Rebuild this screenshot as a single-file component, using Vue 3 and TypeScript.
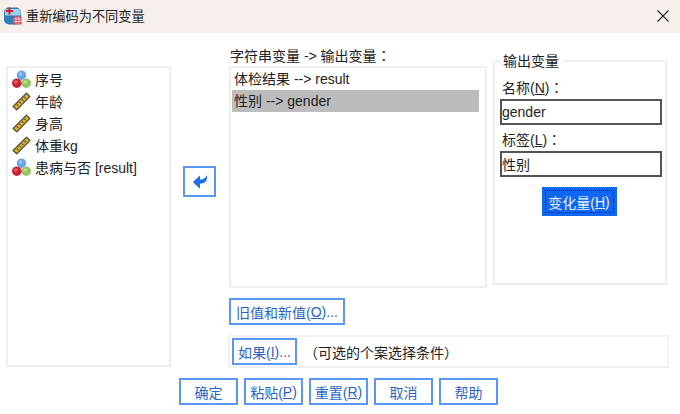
<script setup lang="ts">
interface Item { name: string; type: 'nominal' | 'scale' }
const items: Item[] = [
  { name: '序号', type: 'nominal' },
  { name: '年龄', type: 'scale' },
  { name: '身高', type: 'scale' },
  { name: '体重kg', type: 'scale' },
  { name: '患病与否 [result]', type: 'nominal' },
]
</script>

<template>
  <div class="dialog">
    <header class="titlebar">
      <svg class="appicon" width="20" height="20" viewBox="0 0 20 20">
        <rect x="1" y="1.500" width="17" height="17" rx="5" fill="#2d7fb5" />
        <path d="M4 3h11a2.500 2.500 0 0 1 2.500 2.500V9.500H2V5a2 2 0 0 1 2-2z" fill="#9fd0ea" />
        <path d="M6.500 1.500v7M3 5h7" stroke="#d4202c" stroke-width="2" fill="none" />
        <rect x="10.500" y="10.500" width="8" height="8" fill="#d9394a" />
        <path d="M10.500 13h8M10.500 15.500h8M13 10.500v8M15.800 10.500v8" stroke="#fbe3e3" stroke-width="0.800" />
      </svg>
      <span class="title">重新编码为不同变量</span>
      <svg class="close" width="12" height="12" viewBox="0 0 12 12">
        <path d="M.5.5l11 11M11.500.5l-11 11" stroke="#222" stroke-width="1.100" fill="none" />
      </svg>
    </header>

    <main class="body">
      <div class="work">
        <ul class="source box">
          <li v-for="item in items" :key="item.name" class="src-row">
            <svg v-if="item.type === 'nominal'" class="varicon" width="19" height="19" viewBox="0 0 19 19">
              <circle cx="9.500" cy="5.200" r="4.800" fill="#6aa5e4" />
              <circle cx="14.200" cy="13.200" r="4.800" fill="#97c468" />
              <circle cx="4.800" cy="13.200" r="4.800" fill="#cf2434" />
              <circle cx="8.500" cy="4" r="1.800" fill="#96c4ee" />
              <circle cx="13.200" cy="12" r="1.800" fill="#bcdc90" />
              <circle cx="3.800" cy="12" r="1.800" fill="#e2606a" />
            </svg>
            <svg v-else class="varicon" width="19" height="19" viewBox="0 0 19 19">
              <path d="M14.500 1.200l3.300 3.300L4.800 17.800 1.200 14.500z" fill="#e9b722" stroke="#55524a" stroke-width="1.400" stroke-linejoin="round" />
              <path d="M12.500 5l1.300 1.300M10 7.500l1.300 1.300M7.500 10l1.300 1.300M5 12.500l1.300 1.300" stroke="#4a4430" stroke-width="1.200" fill="none" />
            </svg>
            <span>{{ item.name }}</span>
          </li>
        </ul>

        <div class="right">
          <div class="top">
            <div class="arrow-col">
              <button class="btn arrow" type="button" aria-label="移动">
                <svg width="16" height="16" viewBox="0 0 16 16">
                  <path d="M15 1.200c.6 5.500-1.800 8.300-7 8.400V14.800L.8 8 8 1.500v4c2.800.2 5-.9 7-4.300z" fill="#1e6fe8" />
                </svg>
              </button>
            </div>

            <section class="mapping">
              <div class="map-label">字符串变量 -&gt; 输出变量<span class="tc">：</span></div>
              <ul class="map-list box">
                <li class="map-row">体检结果 --&gt; result</li>
                <li class="map-row selected">性别 --&gt; gender</li>
              </ul>
            </section>

            <fieldset class="output">
              <legend>输出变量</legend>
              <label class="field-label" for="name">名称(<u>N</u>)<span class="tc">：</span></label>
              <input id="name" class="field" value="gender" />
              <label class="field-label second" for="lab">标签(<u>L</u>)<span class="tc">：</span></label>
              <input id="lab" class="field" value="性别" />
              <div class="change-wrap">
                <button class="change" type="button"><span>变化量(<u>H</u>)</span></button>
              </div>
            </fieldset>
          </div>

          <div class="lower">
            <button class="btn old" type="button">旧值和新值(<u>O</u>)...</button>
            <div class="if-panel">
              <button class="btn if" type="button">如果(<u>I</u>)...</button>
              <span class="if-note"><span class="tc">（</span>可选的个案选择条件<span class="tc">）</span></span>
            </div>
          </div>
        </div>
      </div>

      <footer class="actions">
        <button class="btn act" type="button">确定</button>
        <button class="btn act" type="button">粘贴(<u>P</u>)</button>
        <button class="btn act" type="button">重置(<u>R</u>)</button>
        <button class="btn act" type="button">取消</button>
        <button class="btn act" type="button">帮助</button>
      </footer>
    </main>
  </div>
</template>

<style>
html, body { margin: 0; background: #fff; }
</style>

<style scoped>
.dialog {
  width: 680px;
  height: 414px;
  overflow: hidden;
  background: #fff;
  color: #222;
  font-family: "Liberation Sans", "Noto Sans CJK SC", sans-serif;
  font-size: 14px;
  box-sizing: border-box;
}
.titlebar {
  height: 33px;
  background: #f7efec;
  display: flex;
  align-items: center;
  padding: 0 11px 2px 3px;
  box-sizing: border-box;
}
.appicon { flex: none; }
.title { margin-left: 3px; font-size: 13.2px; color: #222; flex: 1; }
.body { padding-left: 6px; }
.work { display: flex; height: 335px; }
.box { border: 2px solid #efefef; box-sizing: border-box; background: #fff; margin: 0; list-style: none; }
.source {
  width: 165px;
  height: 301px;
  margin-top: 33px;
  padding: 0 0 0 4px;
  flex: none;
}
.src-row { height: 22px; display: flex; align-items: center; gap: 4px; font-size: 14px; }
.varicon { flex: none; }
.right { display: flex; flex-direction: column; }
.top { display: flex; align-items: flex-start; height: 255px; }
.arrow-col { width: 58px; flex: none; padding: 133px 0 0 12px; box-sizing: border-box; }
.btn {
  background: #fff;
  border: 2px solid #5a96f5;
  color: #2a64c4;
  font-family: inherit;
  padding: 0;
  box-sizing: border-box;
  display: inline-flex;
  align-items: center;
  justify-content: center;
  white-space: nowrap;
}
.arrow { width: 33px; height: 31px; }
.mapping { width: 258px; flex: none; margin-top: 13px; }
.map-label { height: 20px; line-height: 18px; font-size: 14px; padding-left: 1px; }
.tc { font-family: "Noto Sans CJK TC", sans-serif; }
.map-list { height: 222px; padding: 0 6px 0 1px; }
.map-row { height: 22px; line-height: 22px; padding-left: 2px; font-size: 14px; }
.selected { background: #bcbcbc; }
.output {
  width: 174px;
  height: 232px;
  flex: none;
  margin: 20px 0 0 6px;
  padding: 0 4px 0 5px;
  border: 2px solid #efefef;
  box-sizing: border-box;
  min-width: 0;
}
.output legend { padding: 0 4px 0 3px; margin-left: 0; font-size: 14px; line-height: 16px; }
.field-label { display: block; height: 20px; line-height: 20px; font-size: 14px; padding-left: 2px; margin: 8px 0 2px; }
.field-label.second { margin-top: 4px; }
.field {
  display: block;
  width: 162px;
  height: 26px;
  box-sizing: border-box;
  border: 2px solid #555;
  outline: none;
  padding: 0 1px 0 0;
  font-family: inherit;
  font-size: 14px;
  color: #222;
  background: #fff;
}
.change-wrap { display: flex; justify-content: center; margin-top: 10px; padding-right: 3px; }
.change {
  width: 75px;
  height: 29px;
  background: #0f66f0;
  border: 0;
  padding: 3px;
  color: #e8f0ff;
  font-family: inherit;
  font-size: 14px;
  box-sizing: border-box;
}
.change span {
  display: flex;
  align-items: center;
  justify-content: center;
  height: 100%;
  outline: 1px dotted #0a1a40;
  outline-offset: -1px;
}
.lower { padding-left: 57px; margin-top: 10px; }
.old { width: 116px; height: 27px; font-size: 14px; display: flex; margin-left: 1px; }
.if-panel {
  width: 441px;
  height: 33px;
  margin-top: 10px;
  border: 2px solid #efefef;
  border-right-width: 1px;
  box-sizing: border-box;
  display: flex;
  align-items: center;
  padding-left: 2px;
}
.if { width: 65px; height: 27px; font-size: 14px; flex: none; }
.if-note { font-size: 14px; margin-left: 7px; }
.actions { display: flex; gap: 6px; padding-left: 173px; margin-top: 10px; }
.act { width: 59px; height: 27px; font-size: 14px; }
u { text-underline-offset: 1px; }
</style>
